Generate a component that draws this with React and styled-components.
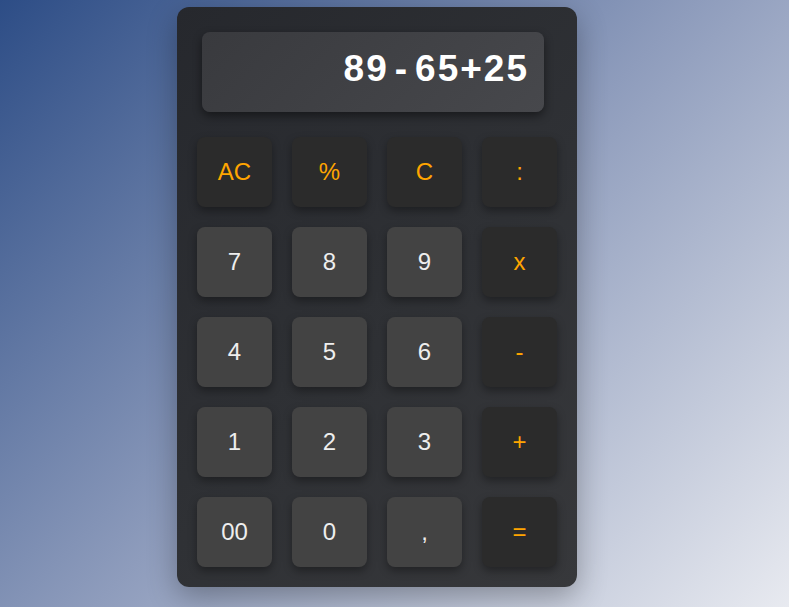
import React from 'react';
import styled, { createGlobalStyle } from 'styled-components';

const GlobalStyle = createGlobalStyle`
  html, body {
    margin: 0;
    height: 100%;
  }
  body {
    background: linear-gradient(135deg, #2d4d86 0%, #8e9cbc 50%, #e8eaf0 100%);
    font-family: "Liberation Sans", Arial, sans-serif;
    overflow: hidden;
  }
`;

const keys = [
  { label: 'AC', op: true },
  { label: '%', op: true },
  { label: 'C', op: true },
  { label: ':', op: true },
  { label: '7' },
  { label: '8' },
  { label: '9' },
  { label: 'x', op: true },
  { label: '4' },
  { label: '5' },
  { label: '6' },
  { label: '-', op: true },
  { label: '1' },
  { label: '2' },
  { label: '3' },
  { label: '+', op: true },
  { label: '00' },
  { label: '0' },
  { label: ',' },
  { label: '=', op: true },
];

export default function App() {
  return (
    <>
      <GlobalStyle />
      <Calculator>
        <Display>
          89<Minus>-</Minus>65+25
        </Display>
        <Keypad>
          {keys.map((k) => (
            <Key key={k.label} $op={k.op}>
              {k.label}
            </Key>
          ))}
        </Keypad>
      </Calculator>
    </>
  );
}

const Calculator = styled.div`
  width: 400px;
  height: 580px;
  box-sizing: border-box;
  margin: 7px 0 0 177px;
  padding: 25px 20px 20px;
  border-radius: 12px;
  background: linear-gradient(135deg, #26282d 0%, #2f3135 55%, #37383b 100%);
  box-shadow: 0 10px 30px rgba(0, 0, 0, 0.3);
`;

const Display = styled.div`
  width: 342px;
  height: 80px;
  box-sizing: border-box;
  margin: 0 0 25px 5px;
  padding: 0 15px 6px 0;
  display: flex;
  align-items: center;
  justify-content: flex-end;
  border-radius: 8px;
  background: linear-gradient(135deg, #393a3e 0%, #47484c 100%);
  box-shadow: 0 4px 10px rgba(0, 0, 0, 0.45);
  color: #fff;
  font-size: 37px;
  font-weight: bold;
  letter-spacing: 2px;
`;

const Minus = styled.span`
  margin: 0 6px;
`;

const Keypad = styled.div`
  display: grid;
  grid-template-columns: repeat(4, 75px);
  grid-auto-rows: 70px;
  gap: 20px;
`;

const Key = styled.button`
  border: none;
  border-radius: 8px;
  padding: 0;
  font-family: "Liberation Sans", Arial, sans-serif;
  font-size: 24px;
  color: ${(p) => (p.$op ? '#ffa500' : '#eeeeee')};
  background: ${(p) => (p.$op ? '#2b2b2b' : '#434343')};
  box-shadow: 0 4px 8px rgba(0, 0, 0, 0.35);
  cursor: pointer;
`;
